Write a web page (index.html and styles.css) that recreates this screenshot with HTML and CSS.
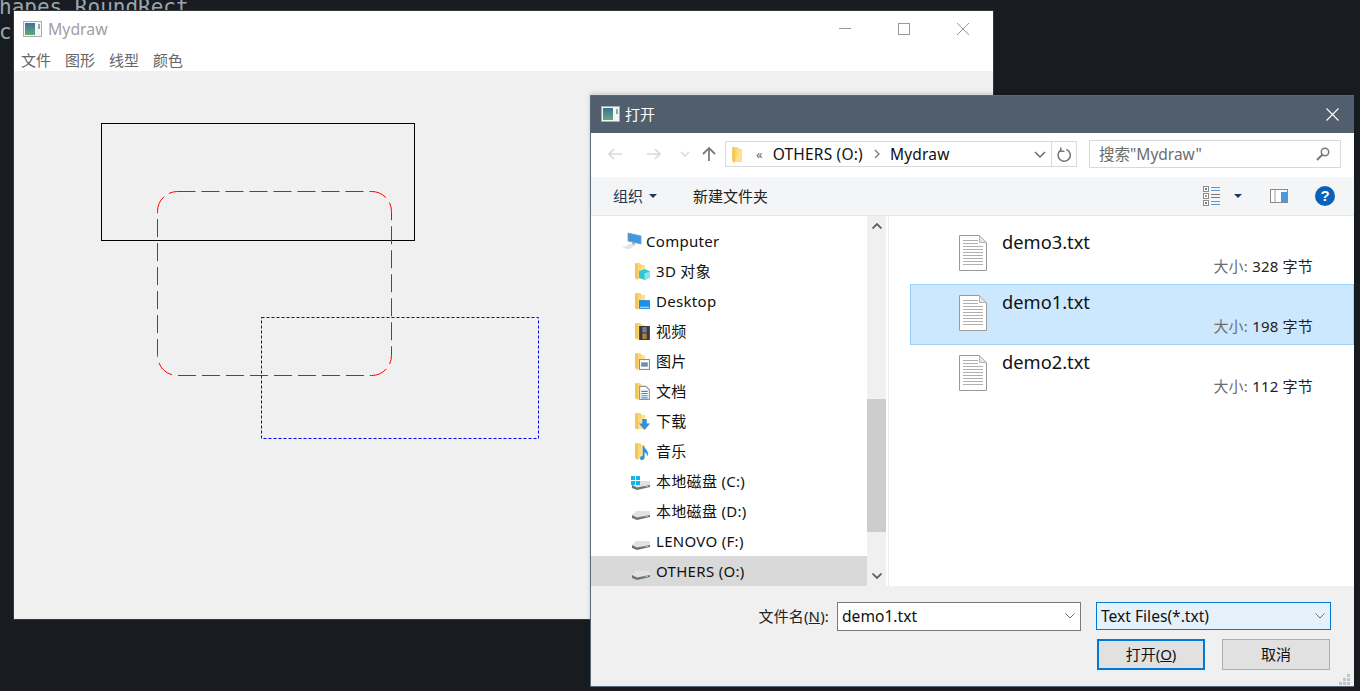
FILE: index.html
```html
<!DOCTYPE html>
<html lang="zh">
<head>
<meta charset="utf-8">
<title>Mydraw</title>
<link rel="stylesheet" href="styles.css">
</head>
<body>
<svg class="defs" width="0" height="0">
  <defs>
    <linearGradient id="appgrad" x1="0" y1="0" x2="0" y2="1">
      <stop offset="0" stop-color="#3f6f9c"/>
      <stop offset="1" stop-color="#63ab74"/>
    </linearGradient>
  </defs>
  <symbol id="appicon" viewBox="0 0 19 16">
    <rect x=".5" y=".5" width="18" height="15" fill="#f4f6f6" stroke="#a9adb0"/>
    <rect x="2" y="2" width="10" height="12" fill="url(#appgrad)"/>
    <rect x="15" y="3" width="2" height="5" fill="#7fb0a8"/>
  </symbol>
  <symbol id="folder" viewBox="0 0 12 18">
    <path d="M1 1h5l2 2h3v14H3l-2-1z" fill="#fcd66f"/>
    <path d="M1 1v15l3 2V3z" fill="#f3c65e"/>
    <path d="M8 3h3v14H4z" fill="#ffe598" opacity=".7"/>
  </symbol>
  <symbol id="drive" viewBox="0 0 18 10">
    <path d="M0 5l4-4h14v4L5 8z" fill="#e0e2e3"/>
    <path d="M0 5v3l5 2 13-3V5L5 7.500z" fill="#6f7173"/>
    <rect x="13" y="6" width="3" height="1" fill="#7fd07f"/>
  </symbol>
  <symbol id="txt" viewBox="0 0 28 36">
    <path d="M.5.500h20l7 7v28H.5z" fill="#fff" stroke="#9a9a9a"/>
    <path d="M20.500.5v7h7z" fill="#e4e4e4" stroke="#b4b4b4"/>
    <path d="M4 5.500h15M4 8.500h15M4 11.500h20M4 14.500h20M4 17.500h20M4 20.500h20M4 23.500h20M4 26.500h20M4 29.500h20" stroke="#b0b0b0" fill="none"/>
  </symbol>
  <symbol id="chev" viewBox="0 0 10 6">
    <path d="M.5.500L5 5 9.500.5" fill="none" stroke="#6d6d6d" stroke-width="1"/>
  </symbol>
</svg>

<main class="desktop">
  <pre class="code">hapes.RoundRect
ce</pre>

  <section class="app">
    <header class="app-title">
      <svg class="ic-app"><use href="#appicon"/></svg>
      <span class="app-name">Mydraw</span>
      <div class="caps">
        <svg class="cap" viewBox="0 0 12 12"><path d="M0 5.500h12" stroke="#999" fill="none"/></svg>
        <svg class="cap" viewBox="0 0 12 12"><rect x=".5" y=".5" width="11" height="11" stroke="#999" fill="none"/></svg>
        <svg class="cap" viewBox="0 0 12 12"><path d="M0 0l12 12M12 0L0 12" stroke="#999" fill="none"/></svg>
      </div>
    </header>
    <nav class="menu"><span>文件</span><span>图形</span><span>线型</span><span>颜色</span></nav>
    <svg class="canvas" viewBox="0 0 979 548" width="979" height="548">
      <rect x="87.500" y="52.500" width="313" height="117" fill="none" stroke="#000"/>
      <rect x="143.500" y="120.500" width="234" height="184" rx="20" fill="none" stroke="#f00" stroke-dasharray="18 6"/>
      <rect x="247.500" y="246.500" width="277" height="121" fill="none" stroke="#00f" stroke-dasharray="3 2"/>
    </svg>
  </section>

  <section class="dialog">
    <header class="dlg-title">
      <svg class="ic-app"><use href="#appicon"/></svg>
      <span class="dlg-name">打开</span>
      <svg class="dlg-x" viewBox="0 0 13 13"><path d="M.5.500l12 12M12.500.5l-12 12" stroke="#fff" stroke-width="1.100" fill="none"/></svg>
    </header>

    <div class="navbar">
      <svg class="nav-arrow" viewBox="0 0 16 14"><path d="M15 7H2M7 2L2 7l5 5" fill="none" stroke="#d8d8d8" stroke-width="1.600"/></svg>
      <svg class="nav-arrow second" viewBox="0 0 16 14"><path d="M1 7h13M9 2l5 5-5 5" fill="none" stroke="#d8d8d8" stroke-width="1.600"/></svg>
      <svg class="nav-drop" viewBox="0 0 10 6"><path d="M1 1l4 4 4-4" fill="none" stroke="#d8d8d8" stroke-width="1.300"/></svg>
      <svg class="nav-up" viewBox="0 0 14 16"><path d="M7 15V2M1 8l6-6 6 6" fill="none" stroke="#7b7b7b" stroke-width="1.800"/></svg>
      <div class="address">
        <svg class="ic-folder-sm"><use href="#folder"/></svg>
        <span class="crumb-more">«</span>
        <span class="crumb">OTHERS (O:)</span>
        <svg class="crumb-sep" viewBox="0 0 6 10"><path d="M1 1l4 4-4 4" fill="none" stroke="#777" stroke-width="1.300"/></svg>
        <span class="crumb">Mydraw</span>
        <svg class="addr-chev" viewBox="0 0 12 7"><path d="M1 1l5 5 5-5" fill="none" stroke="#6d6d6d" stroke-width="1.500"/></svg>
        <div class="addr-refresh">
          <svg class="refresh" viewBox="0 0 16 16"><path d="M4.500 2.500A6.500 6.500 0 1 0 10 2.100M4 0v4h4" fill="none" stroke="#7a7a7a" stroke-width="1.700" transform="translate(0 .5)"/></svg>
        </div>
      </div>
      <div class="search">
        <span class="search-text">搜索"Mydraw"</span>
        <svg class="search-ic" viewBox="0 0 14 14"><circle cx="9" cy="5" r="3.700" fill="none" stroke="#777" stroke-width="1.500"/><path d="M6.500 7.500L1 13" stroke="#777" stroke-width="2" fill="none"/></svg>
      </div>
    </div>

    <div class="toolbar">
      <span class="tool">组织</span>
      <svg class="tool-caret" viewBox="0 0 8 4"><path d="M0 0h8L4 4z" fill="#1f3a5f"/></svg>
      <span class="tool new">新建文件夹</span>
      <div class="tool-right">
        <svg class="view-ic" viewBox="0 0 17 20">
          <g fill="#fff" stroke="#8a8a8a"><rect x=".5" y=".5" width="5" height="5"/><rect x=".5" y="7.500" width="5" height="5"/><rect x=".5" y="14.500" width="5" height="5"/></g>
          <path d="M8 1.500h9M8 4.500h9M8 15.500h9M8 18.500h9" stroke="#5a9be0" fill="none"/>
          <path d="M8 8.500h9M8 11.500h9" stroke="#777" fill="none"/>
          <rect x="2" y="9" width="2" height="2" fill="#b39a3a"/><rect x="2" y="2" width="2" height="2" fill="#5a7fa0"/><rect x="2" y="16" width="2" height="2" fill="#5a7fa0"/>
        </svg>
        <svg class="view-caret" viewBox="0 0 8 4"><path d="M0 0h8L4 4z" fill="#1f3a5f"/></svg>
        <svg class="pane-ic" viewBox="0 0 18 14"><rect x=".5" y=".5" width="17" height="13" fill="#fff" stroke="#8a8a8a"/><rect x="11" y="3" width="6" height="10" fill="#4a98e0"/><rect x="4" y="1" width="2" height="12" fill="#cfcfcf"/></svg>
        <span class="help">?</span>
      </div>
    </div>

    <div class="body">
      <aside class="tree">
        <div class="tree-list">
          <div class="tree-row top">
            <svg class="ic-pc" viewBox="0 0 20 18">
              <path d="M6 1l13 3v8L6 9z" fill="#3a9ae6" stroke="#7f98aa" stroke-width=".8"/>
              <path d="M0 16l8-4 6 1-7 4z" fill="#dfe3e6"/>
              <path d="M10 10.500l3 .7v1.500l-3-.7z" fill="#9aa6ae"/>
            </svg>
            <span>Computer</span>
          </div>
          <div class="tree-row">
            <span class="ic-lib"><svg class="lib-folder"><use href="#folder"/></svg><svg class="lib-over" viewBox="0 0 10 10"><path d="M5 0l5 2v6l-5 2-5-2V2z" fill="#35c4d8"/><path d="M5 4l5-2v6l-5 2z" fill="#8ae4ee"/></svg></span>
            <span>3D 对象</span>
          </div>
          <div class="tree-row">
            <span class="ic-lib"><svg class="lib-folder"><use href="#folder"/></svg><svg class="lib-over" viewBox="0 0 10 10"><rect x="0" y="1" width="10" height="8" fill="#1e8fe6"/><rect x="1" y="7" width="8" height="1" fill="#bfe0ff"/></svg></span>
            <span>Desktop</span>
          </div>
          <div class="tree-row">
            <span class="ic-lib"><svg class="lib-folder"><use href="#folder"/></svg><svg class="lib-over tall" viewBox="0 0 10 13"><rect width="10" height="13" fill="#3d3a38"/><rect x="3" y="1" width="4" height="5" fill="#6e7fa0"/><rect x="3" y="7" width="4" height="5" fill="#b5803a"/></svg></span>
            <span>视频</span>
          </div>
          <div class="tree-row">
            <span class="ic-lib"><svg class="lib-folder"><use href="#folder"/></svg><svg class="lib-over" viewBox="0 0 10 10"><rect x=".5" y=".5" width="9" height="9" fill="#fff" stroke="#909090"/><rect x="2" y="3" width="6" height="4" fill="#6f8ea8"/></svg></span>
            <span>图片</span>
          </div>
          <div class="tree-row">
            <span class="ic-lib"><svg class="lib-folder"><use href="#folder"/></svg><svg class="lib-over tall" viewBox="0 0 10 13"><path d="M.5.500h6l3 3v9H.5z" fill="#fff" stroke="#909090"/><path d="M2 5h6M2 7h6M2 9h6M2 11h6" stroke="#3a8fd8" fill="none"/></svg></span>
            <span>文档</span>
          </div>
          <div class="tree-row">
            <span class="ic-lib"><svg class="lib-folder"><use href="#folder"/></svg><svg class="lib-over" viewBox="0 0 10 10"><path d="M3 0h4v4h3L5 10 0 4h3z" fill="#2f8fe0"/></svg></span>
            <span>下载</span>
          </div>
          <div class="tree-row">
            <span class="ic-lib"><svg class="lib-folder"><use href="#folder"/></svg><svg class="lib-over tall" viewBox="0 0 10 16"><path d="M3 0h1.500c0 3 4.500 4 4.500 9 0 1-.5 2-1 3 0-3-1-4-3-5v6c0 2-2 3-3.500 3S0 15 0 13.500 2 11 3 11z" fill="#1e96f0"/></svg></span>
            <span>音乐</span>
          </div>
          <div class="tree-row">
            <span class="ic-lib"><svg class="lib-drive"><use href="#drive"/></svg><svg class="lib-win" viewBox="0 0 9 9"><path d="M0 0h4v4H0zM5 0h4v4H5zM0 5h4v4H0zM5 5h4v4H5z" fill="#12b4f0"/></svg></span>
            <span>本地磁盘 (C:)</span>
          </div>
          <div class="tree-row">
            <span class="ic-lib"><svg class="lib-drive"><use href="#drive"/></svg></span>
            <span>本地磁盘 (D:)</span>
          </div>
          <div class="tree-row">
            <span class="ic-lib"><svg class="lib-drive"><use href="#drive"/></svg></span>
            <span>LENOVO (F:)</span>
          </div>
          <div class="tree-row current">
            <span class="ic-lib"><svg class="lib-drive"><use href="#drive"/></svg></span>
            <span>OTHERS (O:)</span>
          </div>
        </div>
        <div class="scroll">
          <svg class="scroll-btn" viewBox="0 0 10 6"><path d="M.5 5.500L5 1l4.500 4.500" fill="none" stroke="#606060" stroke-width="1.800"/></svg>
          <div class="scroll-track"><div class="scroll-thumb"></div></div>
          <svg class="scroll-btn" viewBox="0 0 10 6"><path d="M.5.500L5 5 9.500.5" fill="none" stroke="#606060" stroke-width="1.800"/></svg>
        </div>
      </aside>

      <div class="files">
        <div class="file">
          <svg class="ic-txt"><use href="#txt"/></svg>
          <span class="file-name">demo3.txt</span>
          <span class="file-size"><em>大小:</em> 328 字节</span>
        </div>
        <div class="file selected">
          <svg class="ic-txt"><use href="#txt"/></svg>
          <span class="file-name">demo1.txt</span>
          <span class="file-size"><em>大小:</em> 198 字节</span>
        </div>
        <div class="file">
          <svg class="ic-txt"><use href="#txt"/></svg>
          <span class="file-name">demo2.txt</span>
          <span class="file-size"><em>大小:</em> 112 字节</span>
        </div>
      </div>
    </div>

    <footer class="foot">
      <div class="foot-row">
        <label class="fname-label">文件名(<u>N</u>):</label>
        <div class="combo name"><span>demo1.txt</span><svg class="combo-chev"><use href="#chev"/></svg></div>
        <div class="combo type"><span>Text Files(*.txt)</span><svg class="combo-chev"><use href="#chev"/></svg></div>
      </div>
      <div class="foot-row btns">
        <button class="btn primary">打开(<u>O</u>)</button>
        <button class="btn">取消</button>
      </div>
      <svg class="grip" viewBox="0 0 12 12"><path d="M8 0h3v3H8zM4 4h3v3H4zM8 4h3v3H8zM0 8h3v3H0zM4 8h3v3H4zM8 8h3v3H8z" fill="#c4c4c4"/></svg>
    </footer>
  </section>
</main>
</body>
</html>
```
FILE: styles.css
```css
html, body { margin: 0; padding: 0; height: 100%; overflow: hidden; }
body { background: #181c20; font-family: "Noto Sans", "Noto Sans CJK SC", sans-serif; color: #111; }
.defs { position: absolute; }
.desktop { position: relative; width: 1360px; height: 691px; overflow: hidden; }

.code {
  position: absolute; left: -1px; top: -5px; margin: 0;
  font: 21px/25px "DejaVu Sans Mono", monospace; color: #9aa5ad;
}

/* main window */
.app {
  position: absolute; left: 14px; top: 11px; width: 979px; height: 608px;
  background: #f0f0f0; display: flex; flex-direction: column; box-shadow: 0 0 0 1px #34383c;
}
.app-title { height: 38px; background: #fff; display: flex; align-items: center; padding-left: 9px; }
.ic-app { width: 19px; height: 16px; flex: none; margin-top: -3px; }
.app-name { margin-left: 6px; font-size: 15.800px; line-height: 20px; color: #a0a0a0; margin-top: -2px; }
.caps { margin-left: auto; display: flex; gap: 47px; padding-right: 24px; margin-top: -3px; }
.cap { width: 12px; height: 12px; }
.menu { height: 22px; background: #fff; display: flex; gap: 14px; padding-left: 7px; font-size: 15px; line-height: 22px; color: #666; }
.canvas { display: block; }

/* dialog */
.dialog {
  position: absolute; left: 590px; top: 95px; width: 763px; height: 590px;
  background: #fff; border: 1px solid #5c6875; border-right: 0;
  display: flex; flex-direction: column; box-shadow: 0 -2px 4px rgba(0,0,0,.15);
}
.dlg-title { height: 37px; background: #515e6d; display: flex; align-items: center; padding-left: 10px; flex: none; }
.dlg-title .ic-app { margin-top: -1px; }
.dlg-name { color: #fff; font-size: 15px; line-height: 20px; margin-left: 5px; margin-top: -2px; }
.dlg-x { width: 13px; height: 13px; margin-left: auto; margin-right: 15px; margin-top: -1px; }

.navbar { height: 44px; padding-bottom: 2px; box-sizing: border-box; background: #fff; display: flex; align-items: center; flex: none; }
.nav-arrow { width: 16px; height: 14px; margin-left: 16px; flex: none; }
.nav-arrow.second { margin-left: 23px; }
.nav-drop { width: 10px; height: 6px; margin-left: 18px; flex: none; }
.nav-up { width: 14px; height: 16px; margin-left: 12px; flex: none; }
.address {
  margin-left: 9px; width: 350px; height: 24px; border: 1px solid #d9d9d9;
  display: flex; align-items: center; font-size: 15.500px; line-height: 20px; color: #111;
}
.ic-folder-sm { width: 12px; height: 17px; margin-left: 5px; flex: none; }
.crumb-more { margin-left: 13px; color: #666; font-size: 13px; }
.crumb { margin-left: 10px; letter-spacing: .2px; }
.crumb-sep { width: 6px; height: 10px; margin-left: 11px; flex: none; }
.crumb-sep + .crumb { margin-left: 10px; }
.addr-chev { width: 12px; height: 7px; margin-left: auto; margin-right: 5px; flex: none; }
.addr-refresh { width: 24px; height: 24px; border-left: 1px solid #d9d9d9; display: flex; align-items: center; justify-content: center; }
.refresh { width: 15px; height: 15px; }
.search {
  margin-left: 12px; width: 241px; height: 26px; border: 1px solid #d9d9d9;
  display: flex; align-items: center; padding-left: 9px; font-size: 15.500px; line-height: 20px; color: #6d6d6d;
}
.search-ic { width: 14px; height: 14px; margin-left: auto; margin-right: 10px; }

.toolbar {
  height: 38px; background: #f4f5f7; border-bottom: 1px solid #e6e6e6; display: flex; align-items: center;
  flex: none; font-size: 15px; line-height: 20px; color: #1c3550;
}
.tool { margin-left: 22px; margin-top: -1px; }
.tool-caret { width: 8px; height: 4px; margin-left: 6px; }
.tool.new { margin-left: 36px; color: #222; }
.tool-right { margin-left: auto; display: flex; align-items: center; }
.view-ic { width: 17px; height: 20px; }
.view-caret { width: 8px; height: 4px; margin-left: 14px; }
.pane-ic { width: 18px; height: 14px; margin-left: 28px; }
.help {
  width: 20px; height: 20px; border-radius: 50%; background: #0a62b8; color: #fff; font: bold 15px/20px "Liberation Sans", sans-serif;
  text-align: center; margin-left: 27px; margin-right: 19px;
}

.body { height: 370px; flex: none; display: flex; }
.tree { flex: none; display: flex; padding-right: 2px; border-right: 1px solid #ececec; }
.tree-list { width: 276px; padding-top: 10px; box-sizing: border-box; font-size: 15px; line-height: 20px; letter-spacing: .3px; }
.tree-row { height: 30px; display: flex; align-items: center; padding-left: 41px; }
.tree-row.top { padding-left: 31px; }
.tree-row.current { background: #d9d9d9; }
.ic-pc { width: 20px; height: 18px; margin-right: 4px; flex: none; }
.ic-lib { width: 18px; height: 18px; margin-right: 6px; position: relative; flex: none; display: block; }
.lib-folder { position: absolute; left: 2px; top: 0; width: 12px; height: 18px; }
.lib-over { position: absolute; right: 0; bottom: 0; width: 11px; height: 11px; }
.lib-over.tall { height: 14px; }
.lib-drive { position: absolute; left: 0; bottom: 0; width: 18px; height: 10px; }
.lib-win { position: absolute; left: -1px; top: 4px; width: 9px; height: 9px; }

.scroll { width: 19px; background: #f0f0f0; display: flex; flex-direction: column; align-items: center; }
.scroll-btn { width: 10px; height: 6px; margin: 7px 0; flex: none; }
.scroll-track { flex: 1; width: 100%; padding-top: 163px; box-sizing: border-box; }
.scroll-thumb { height: 133px; background: #cdcdcd; }

.files { flex: 1; padding-top: 8px; padding-left: 21px; background: #fff; }
.file { height: 60px; position: relative; border: 1px solid transparent; box-sizing: border-box; }
.file.selected { background: #cce8ff; border-color: #99d1ff; height: 61px; margin-bottom: -1px; }
.ic-txt { position: absolute; left: 48px; top: 10px; width: 28px; height: 36px; }
.file-name { position: absolute; left: 91px; top: 4px; font-size: 18.300px; line-height: 26px; color: #111; white-space: nowrap; }
.file-size { position: absolute; right: 40px; top: 31px; font-size: 15px; line-height: 20px; letter-spacing: .2px; color: #222; white-space: nowrap; }
.file-size em { font-style: normal; color: #6d6d6d; }

.foot { flex: 1; background: #f0f0f0; position: relative; display: flex; flex-direction: column; }
.foot-row { display: flex; align-items: flex-start; padding-right: 23px; justify-content: flex-end; }
.foot-row:first-child { margin-top: 16px; }
.fname-label { font-size: 15px; line-height: 29px; letter-spacing: .15px; color: #222; margin-right: 8px; }
.combo {
  height: 27px; border: 1px solid #7a7a7a; background: #fff; display: flex; align-items: center;
  padding-left: 4px; font-size: 15.600px; line-height: 20px;
}
.combo.name { width: 238px; height: 26px; padding-bottom: 1px; }
.combo.type { width: 229px; height: 26px; margin-left: 15px; border-color: #0078d7; background: #e5f1fb; }
.combo-chev { width: 10px; height: 6px; margin-left: auto; margin-right: 5px; }
.btns { margin-top: 8px; gap: 17px; padding-right: 24px; }
.btn {
  width: 108px; height: 31px; background: #e1e1e1; border: 1px solid #adadad; font: 15px/20px "Noto Sans", "Noto Sans CJK SC", sans-serif; color: #111; padding: 0 0 2px;
}
.btn.primary { border: 2px solid #0078d7; }
.grip { position: absolute; right: 3px; bottom: 0; width: 12px; height: 12px; }
```
